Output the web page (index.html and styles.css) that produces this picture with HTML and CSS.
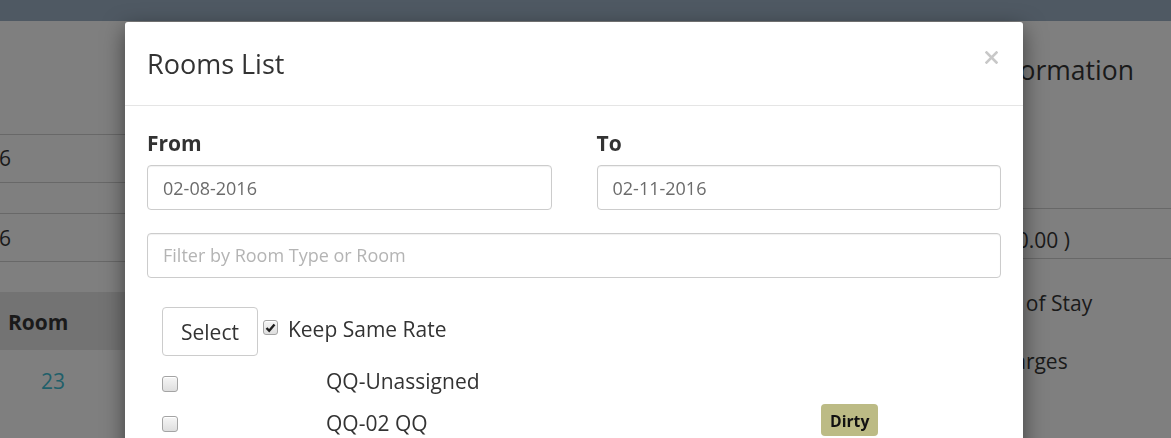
FILE: index.html
```html
<!DOCTYPE html>
<html>
<head>
<meta charset="utf-8">
<link rel="stylesheet" href="styles.css">
</head>
<body>
<div class="topbar"></div>
<div class="page">
  <div class="left">
    <div class="tbl tbl-a"><div class="cell cut">6</div></div>
    <div class="tbl tbl-b"><div class="cell cut">6</div></div>
    <div class="thead"><div class="th">Room</div></div>
    <div class="trow"><a class="link">23</a></div>
  </div>
  <div class="right">
    <div class="r-title">Information</div>
    <div class="r-amount"><span class="amt">( 0.00 )</span></div>
    <div class="r-stay">Length of Stay</div>
    <div class="r-charges">Total Charges</div>
  </div>
</div>

<div class="modal">
  <div class="modal-header">
    <div class="modal-title">Rooms List</div>
    <span class="close"><svg width="13" height="13" viewBox="0 0 13 13"><path d="M1.5 1.5 L11.5 11.5 M11.5 1.5 L1.5 11.5" stroke="#c8c8c8" stroke-width="2.6" stroke-linecap="square"/></svg></span>
  </div>
  <div class="modal-body">
    <div class="row">
      <div class="col">
        <label class="lbl">From</label>
        <div class="input">02-08-2016</div>
      </div>
      <div class="col">
        <label class="lbl">To</label>
        <div class="input">02-11-2016</div>
      </div>
    </div>
    <div class="filter-group">
      <div class="input placeholder">Filter by Room Type or Room</div>
    </div>
    <div class="list">
      <div class="select-row">
        <span class="btn">Select</span>
        <span class="cb cb-checked"><svg width="11" height="10" viewBox="0 0 11 10"><path d="M1.5 5 L4.2 7.8 L9.5 1.5" fill="none" stroke="#1f1f1f" stroke-width="2.4"/></svg></span>
        <span class="keep">Keep Same Rate</span>
      </div>
      <div class="room-row r1">
        <span class="cb"></span>
        <span class="room">QQ-Unassigned</span>
        <span></span>
      </div>
      <div class="room-row r2">
        <span class="cb"></span>
        <span class="room">QQ-02 QQ</span>
        <span class="badge">Dirty</span>
      </div>
    </div>
  </div>
</div>
</body>
</html>
```

FILE: styles.css
```css
* { box-sizing: border-box; }
html, body {
  margin: 0;
  height: 438px;
  overflow: hidden;
}
body {
  background: #7f7f7f;
  font-family: "Open Sans", "DejaVu Sans", sans-serif;
  font-size: 21px;
  line-height: 30px;
  color: #1a1a1a;
}
.topbar {
  height: 21px;
  background: #4f5963;
}
.page {
  display: flex;
}
.left {
  width: 560px;
  flex: none;
}
.tbl {
  border-top: 1px solid #686868;
  border-bottom: 1px solid #686868;
}
.tbl-a { margin-top: 113px; }
.tbl-a .cell { padding: 8px 0 9px 0; }
.tbl-b { margin-top: 30px; }
.tbl-b .cell { padding: 9px 0 8px 0; }
.cut { margin-left: -1px; }
.thead {
  margin-top: 30px;
  height: 58px;
  background: #737373;
  padding: 15px 0 0 8px;
}
.th { font-weight: 700; }
.trow { padding: 16px 0 0 41px; }
.link { color: #1f5f6a; }

.right {
  flex: 1;
  position: relative;
}
.r-title {
  font-size: 26.5px;
  line-height: 38px;
  margin-top: 30px;
  margin-left: 427px;
}
.r-amount {
  margin-top: 119px;
  border-top: 1px solid #686868;
  border-bottom: 1px solid #686868;
  height: 51px;
  padding-top: 16px;
}
.amt { margin-left: 445px; }
.r-stay {
  margin-top: 29px;
  margin-left: 393px;
}
.r-charges {
  margin-top: 28px;
  margin-left: 374px;
}

.modal {
  position: fixed;
  left: 125px;
  top: 22px;
  width: 898px;
  height: 460px;
  background: #fff;
  box-shadow: 0 7px 22px rgba(0,0,0,0.5);
  border-radius: 3px 3px 0 0;
}
.modal-header {
  padding: 22px 22px 22px 22px;
  border-bottom: 1px solid #e5e5e5;
  display: flex;
  justify-content: space-between;
  align-items: flex-start;
}
.modal-title {
  font-size: 27px;
  line-height: 39px;
  color: #333;
}
.close {
  display: block;
  width: 13px;
  height: 13px;
  margin-top: 7px;
  margin-right: 3px;
}
.close svg { display: block; }
.modal-body {
  padding: 22px;
}
.row {
  display: flex;
  margin: 0 -22.5px;
}
.col {
  flex: 1;
  padding: 0 22.5px;
  margin-bottom: 22.5px;
}
.lbl {
  display: block;
  font-weight: 700;
  color: #333;
  margin-bottom: 7px;
}
.input {
  height: 45px;
  border: 1px solid #ccc;
  border-radius: 4px;
  padding: 7.5px 15px;
  font-size: 18px;
  line-height: 28px;
  color: #6b6b6b;
  box-shadow: inset 0 1px 1px rgba(0,0,0,0.06);
}
.placeholder { color: #b4b4b4; }
.filter-group { margin-bottom: 29px; }
.list { padding-left: 15px; color: #333; }
.select-row {
  display: flex;
  align-items: flex-start;
}
.btn {
  display: block;
  border: 1px solid #ccc;
  border-radius: 4px;
  padding: 9px 18px 8px;
  color: #333;
  background: #fff;
}
.cb {
  display: block;
  width: 16px;
  height: 16px;
  border: 1px solid #a4a4a4;
  border-radius: 3px;
  background: linear-gradient(#f6f6f6, #dedede);
  box-shadow: inset 0 1px 0 #fff;
}
.cb-checked {
  margin-left: 5px;
  margin-top: 13px;
  width: 15px;
  height: 15px;
  padding: 2px 0 0 1px;
}
.cb-checked svg { display: block; }
.keep {
  margin-left: 10px;
  margin-top: 7px;
}
.room-row {
  display: grid;
  grid-template-columns: 164px 495px auto;
  align-items: start;
  height: 42.5px;
}
.r1 { margin-top: 10px; }
.r1 .cb { margin-top: 10px; }
.r2 .cb { margin-top: 8px; }
.badge {
  display: block;
  justify-self: start;
  margin-top: -4px;
  height: 32px;
  padding: 3px 9px 0;
  line-height: 29px;
  font-size: 15.75px;
  font-weight: 700;
  color: #111;
  background: #bcbb85;
  border-radius: 4px;
}
```
